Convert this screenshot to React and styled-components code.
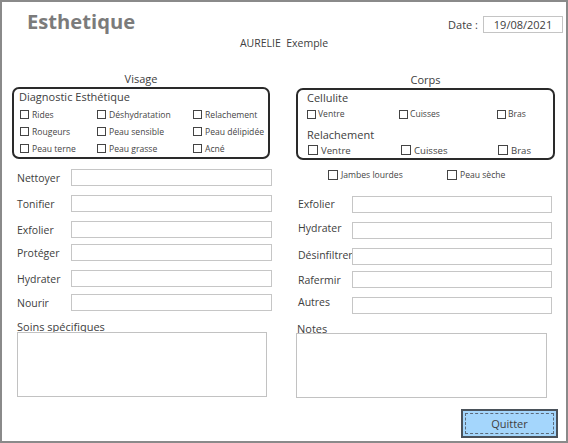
import React from "react";
import styled, { createGlobalStyle } from "styled-components";

const Global = createGlobalStyle`
  html, body { margin: 0; padding: 0; background: #fff; }
  body { font-family: "Open Sans", "DejaVu Sans", sans-serif; color: #404040; }
  * { box-sizing: border-box; }
`;

const Frame = styled.div`
  width: 568px;
  height: 443px;
  border: 2px solid #8a8a8a;
  background: #fff;
  display: flex;
  flex-direction: column;
  overflow: hidden;
`;

const Header = styled.div`
  display: flex;
  justify-content: space-between;
  align-items: flex-start;
  height: 33px;
`;

const Title = styled.h1`
  margin: 5px 0 0 25px;
  font-size: 20.2px;
  line-height: 28px;
  font-weight: 700;
  color: #7b7b7b;
`;

const DateGroup = styled.div`
  margin: 14px 3px 0 0;
  display: flex;
  align-items: center;
  gap: 5px;
  font-size: 11px;
  color: #404040;
`;

const DateBox = styled.div`
  width: 80px;
  height: 17px;
  border: 1px solid #c4c4c4;
  text-align: center;
  line-height: 15px;
  font-size: 11px;
`;

const Client = styled.div`
  text-align: center;
  font-size: 10.5px;
  line-height: 16px;
  color: #404040;
  white-space: pre;
`;

const Columns = styled.div`
  display: grid;
  grid-template-columns: 282px 282px;
`;

const Column = styled.div`
  display: flex;
  flex-direction: column;
`;

const SectionHeading = styled.div`
  margin: ${(p) => p.$top}px 0 1px ${(p) => p.$left}px;
  width: ${(p) => p.$width}px;
  text-align: center;
  font-size: 11px;
  line-height: 14px;
  color: #404040;
`;

const GroupBox = styled.div`
  margin-left: ${(p) => p.$left}px;
  width: ${(p) => p.$width}px;
  height: 72px;
  border: 2px solid #2a2a2a;
  border-radius: 7px;
  padding: 1px 0 0 ${(p) => p.$pad}px;
`;

const GroupTitle = styled.div`
  font-size: 11px;
  line-height: 14px;
  margin-top: ${(p) => p.$top || 0}px;
  color: #404040;
`;

const CheckGrid = styled.div`
  display: grid;
  grid-template-columns: ${(p) => p.$cols};
  grid-auto-rows: ${(p) => p.$row}px;
  margin-top: ${(p) => p.$top || 0}px;
  padding-left: ${(p) => p.$pad || 0}px;
`;

const CheckItem = styled.label`
  display: inline-flex;
  align-items: center;
  gap: ${(p) => p.$gap}px;
  font-size: ${(p) => p.$font}px;
  color: #454545;
  white-space: nowrap;
`;

const Box = styled.span`
  display: inline-block;
  width: ${(p) => p.$size}px;
  height: ${(p) => p.$size}px;
  border: 1px solid #444;
  background: #fff;
  flex: none;
`;

const Check = ({ children, size = 9, gap = 3, font = 8.6 }) => (
  <CheckItem $gap={gap} $font={font}>
    <Box $size={size} />
    {children}
  </CheckItem>
);

const ExtraRow = styled.div`
  display: grid;
  grid-template-columns: 119px 1fr;
  margin-top: 8px;
  padding-left: 44px;
  height: 14px;
`;

const Form = styled.div`
  display: flex;
  flex-direction: column;
  padding-left: ${(p) => p.$pad}px;
  margin-top: ${(p) => p.$top}px;
`;

const Row = styled.div`
  display: flex;
  align-items: center;
  height: 17px;
  margin-top: ${(p) => p.$gap || 0}px;
`;

const FieldLabel = styled.span`
  width: 54px;
  flex: none;
  font-size: 10.5px;
  color: #404040;
  white-space: nowrap;
  margin-bottom: ${(p) => p.$lift || 0}px;
`;

const Field = styled.div`
  width: ${(p) => p.$width}px;
  height: 17px;
  border: 1px solid #c6c6c6;
  background: #fff;
`;

const AreaLabel = styled.div`
  margin: ${(p) => p.$top}px 0 0 ${(p) => p.$left}px;
  font-size: 11px;
  line-height: 14px;
  color: #404040;
`;

const Area = styled.div`
  margin: ${(p) => p.$top}px 0 0 ${(p) => p.$left}px;
  width: ${(p) => p.$width}px;
  height: 65px;
  border: 1px solid #c2c2c2;
  background: #fff;
`;

const QuitButton = styled.button`
  align-self: flex-end;
  margin: 11px 8px 0 0;
  width: 97px;
  height: 29px;
  background: #a4d6fc;
  border: 2px solid #4a525a;
  outline: 1px dashed #5a6a7a;
  outline-offset: -5px;
  font-family: "Open Sans", "DejaVu Sans", sans-serif;
  font-size: 11px;
  color: #404040;
  padding: 0;
`;

const leftRows = [
  ["Nettoyer", 0],
  ["Tonifier", 9],
  ["Exfolier", 9],
  ["Protéger", 6],
  ["Hydrater", 9],
  ["Nourir", 7],
];

const rightRows = [
  ["Exfolier", 0, 2],
  ["Hydrater", 9, 5],
  ["Désinfiltrer", 9, 4],
  ["Rafermir", 6, 0],
  ["Autres", 9, 8],
];

export default function App() {
  return (
    <>
      <Global />
      <Frame>
        <Header>
          <Title>Esthetique</Title>
          <DateGroup>
            <span>Date :</span>
            <DateBox>19/08/2021</DateBox>
          </DateGroup>
        </Header>
        <Client>{"AURELIE  Exemple"}</Client>
        <Columns>
          <Column>
            <SectionHeading $top={21} $left={10} $width={258}>Visage</SectionHeading>
            <GroupBox $left={10} $width={258} $pad={5}>
              <GroupTitle>Diagnostic Esthétique</GroupTitle>
              <CheckGrid $cols="77px 96px 1fr" $row={17} $top={2} $pad={1}>
                <Check>Rides</Check>
                <Check>Déshydratation</Check>
                <Check>Relachement</Check>
                <Check>Rougeurs</Check>
                <Check>Peau sensible</Check>
                <Check>Peau délipidée</Check>
                <Check>Peau terne</Check>
                <Check>Peau grasse</Check>
                <Check>Acné</Check>
              </CheckGrid>
            </GroupBox>
            <Form $pad={15} $top={10}>
              {leftRows.map(([label, gap]) => (
                <Row key={label} $gap={gap}>
                  <FieldLabel>{label}</FieldLabel>
                  <Field $width={201} />
                </Row>
              ))}
            </Form>
            <AreaLabel $top={9} $left={15}>Soins spécifiques</AreaLabel>
            <Area $top={-2} $left={15} $width={250} />
          </Column>
          <Column>
            <SectionHeading $top={22} $left={12} $width={259}>Corps</SectionHeading>
            <GroupBox $left={12} $width={259} $pad={9}>
              <GroupTitle>Cellulite</GroupTitle>
              <CheckGrid $cols="92px 98px 1fr" $row={14} $top={2}>
                <Check gap={2}>Ventre</Check>
                <Check gap={2}>Cuisses</Check>
                <Check gap={2}>Bras</Check>
              </CheckGrid>
              <GroupTitle $top={7}>Relachement</GroupTitle>
              <CheckGrid $cols="93px 97px 1fr" $row={14} $top={1} $pad={1}>
                <Check size={10} gap={3} font={9.6}>Ventre</Check>
                <Check size={10} gap={3} font={9.6}>Cuisses</Check>
                <Check size={10} gap={3} font={9.6}>Bras</Check>
              </CheckGrid>
            </GroupBox>
            <ExtraRow>
              <Check size={10} gap={3}>Jambes lourdes</Check>
              <Check size={10} gap={3}>Peau sèche</Check>
            </ExtraRow>
            <Form $pad={14} $top={14}>
              {rightRows.map(([label, gap, lift]) => (
                <Row key={label} $gap={gap}>
                  <FieldLabel $lift={lift}>{label}</FieldLabel>
                  <Field $width={200} />
                </Row>
              ))}
            </Form>
            <AreaLabel $top={8} $left={13}>Notes</AreaLabel>
            <Area $top={-3} $left={12} $width={251} />
            <QuitButton>Quitter</QuitButton>
          </Column>
        </Columns>
      </Frame>
    </>
  );
}
